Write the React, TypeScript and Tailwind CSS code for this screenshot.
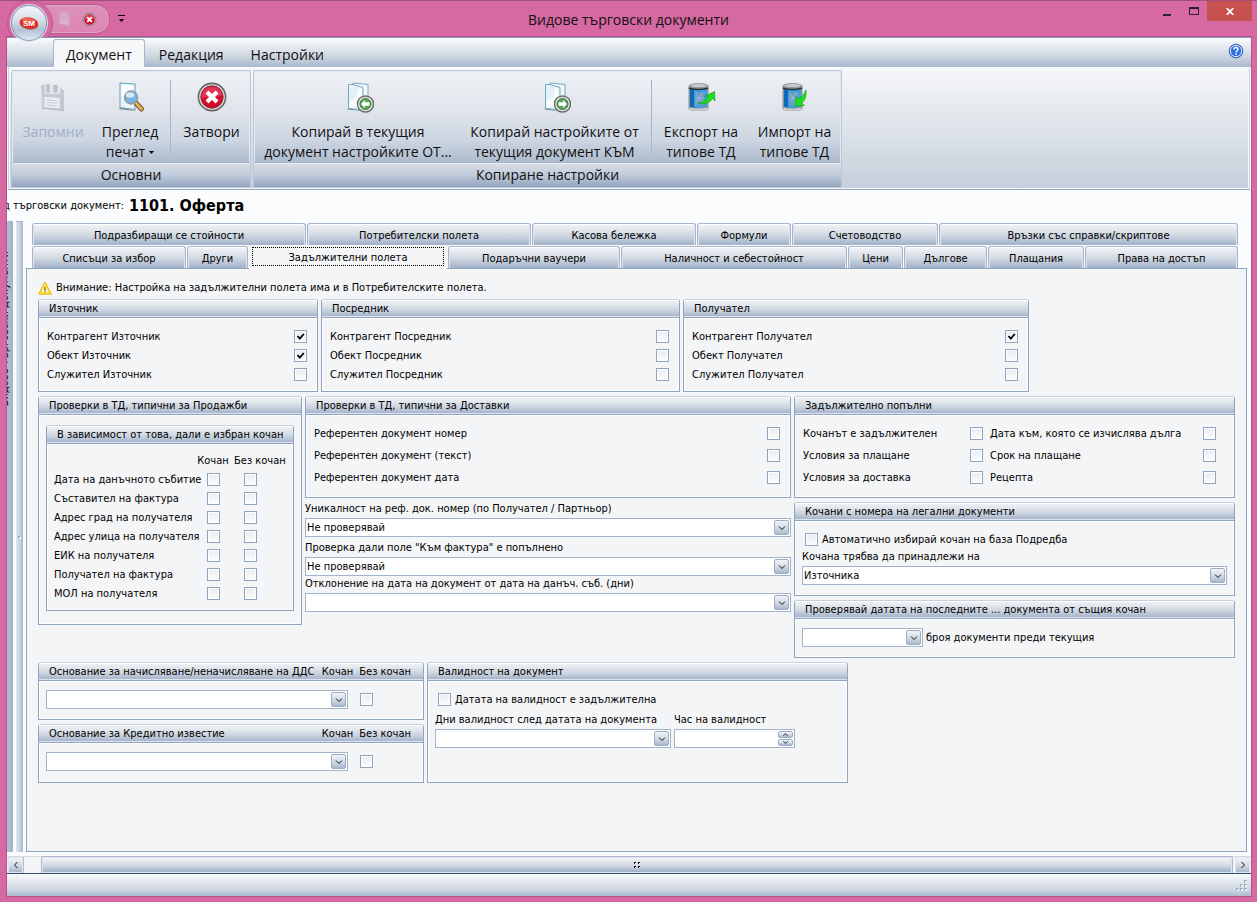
import type { ReactNode } from 'react';
import { useId } from 'react';

const HEADER =
  'bg-[linear-gradient(to_bottom,#f1f4f7_0%,#e1e6ec_30%,#c9d2de_62%,#a9b7cc_92%,#a3b2c9_100%)]';
const BUTTON =
  'bg-[linear-gradient(to_bottom,#f1f4f7_0%,#d5dce6_50%,#aab8cd_100%)]';

/* ---------- icons ---------- */

function FloppyIcon({ className }: { className: string }) {
  return (
    <svg viewBox="1 0 32 32" className={className} aria-hidden="true">
      <path d="M5 4l4-.5v9.500l15-.5V6l3 3v20L6 27z" fill="#c6ccd4" />
      <path d="M9 3h14v10l-14-.6z" fill="#e3e7ec" />
      <path d="M10.500 3h3v9l-3-.2zM17.500 4h4v7.500h-4z" fill="#b9bfc9" />
      <path d="M8.500 16l15 1v10.500l-15-1.500z" fill="#eceef1" />
      <path d="M11 19l10 .8M11 21.500l10 .8M11 24l10 .9" stroke="#c5cad3" strokeWidth="1" />
      <path d="M6 27l21 2.500V9" fill="none" stroke="#b1b8c3" strokeWidth="1.200" />
    </svg>
  );
}

function PreviewIcon() {
  return (
    <svg viewBox="0 0 32 32" className="h-8 w-8" aria-hidden="true">
      <path d="M4 28l4-1.500 14 3.500z" fill="#4c5965" opacity=".7" />
      <path d="M6 2l15 1v25.500L6 26.500z" fill="#e9f5fb" stroke="#78a6c2" strokeWidth="1.1" />
      <path d="M8 4l12 1-12 14z" fill="#fff" opacity=".8" />
      <path d="M21.500 21.500l6 6.500" stroke="#6f4a1c" strokeWidth="4.800" strokeLinecap="round" />
      <path d="M21.500 21.500l6 6.500" stroke="#e3b45f" strokeWidth="2.800" strokeLinecap="round" />
      <circle cx="17" cy="16.500" r="6.400" fill="#78b7e2" stroke="#8d9ca8" strokeWidth="1.600" />
      <ellipse cx="16" cy="14" rx="4.200" ry="2.800" fill="#d9effb" opacity=".9" />
    </svg>
  );
}

function CloseIcon({ className }: { className: string }) {
  return (
    <svg viewBox="0 0 32 32" className={className} aria-hidden="true">
      <circle cx="16" cy="16" r="13.600" fill="#e9e6e6" stroke="#6a6463" strokeWidth="1.600" />
      <circle cx="16" cy="16" r="11.200" fill="#d80a2c" stroke="#6d3a3e" strokeWidth="1" />
      <path d="M5.500 14a10.800 10.800 0 0 1 21 0q-5 2-10.500 2T5.500 17z" fill="#f0607a" opacity=".5" />
      <path d="M12.500 12.500l7 7M19.500 12.500l-7 7" stroke="#fff" strokeWidth="4.200" strokeLinecap="square" />
    </svg>
  );
}

function CopyDocIcon({ direction }: { direction: 'left' | 'right' }) {
  return (
    <svg viewBox="-2 0 32 32" className="h-8 w-8" aria-hidden="true">
      <path d="M3 28.500l3-1.500 14 3z" fill="#4c5965" opacity=".7" />
      <path d="M9 2l15 1.500v22L9 23z" fill="#f2f9fc" stroke="#76a9bd" strokeWidth="1" />
      <path d="M4.500 3.500H9l10 3V29L4.500 27.500z" fill="#e4f2f7" stroke="#76a9bd" strokeWidth="1" />
      <path d="M5.500 20q8-1 9-13l3 1v11q-5 8-12 8z" fill="#fff" opacity=".75" />
      <circle cx="21.500" cy="23" r="8" fill="#f0f1ef" stroke="#6a6d69" strokeWidth="1.500" />
      <circle cx="21.500" cy="23" r="5.600" fill="#58a55a" stroke="#47734a" strokeWidth="1" />
      {direction === 'left' ? (
        <path d="M17 23l4-4v2.300h4.500v3.400H21V27z" fill="#fff" />
      ) : (
        <path d="M26 23l-4-4v2.300h-4.500v3.400H22V27z" fill="#fff" />
      )}
    </svg>
  );
}

function DatabaseIcon({ mode }: { mode: 'export' | 'import' }) {
  return (
    <svg viewBox="0 0 32 32" className="h-8 w-8" aria-hidden="true">
      <path d="M3.500 5q0-2.500 10-2.500t10 2.500v22.500q0 2.500-10 2.500t-10-2.500z" fill="#8e9499" />
      <path d="M5 8q8.500 2 17 0v17.500q-8.500 2.500-17 0z" fill="#3aa0e4" />
      <path d="M5 8q2 .8 4 1v17.600q-2-.2-4-1z" fill="#1268b8" />
      <path d="M10 11q5 .8 9.500-.3v13q-5 1.200-9.500.2z" fill="#6e9fc4" />
      <path d="M11 13l7 9M12 20l5-8M11 17h8" stroke="#b5d2e6" strokeWidth="1" strokeDasharray="1 1" />
      <path d="M4 7.200q9.500 2.500 19 0" fill="none" stroke="#2a3238" strokeWidth="1.600" />
      <ellipse cx="13.500" cy="4.600" rx="9" ry="2" fill="#c9cccf" stroke="#8d9296" strokeWidth=".8" />
      <path d="M4.500 27.500q9 2.600 18 0" fill="none" stroke="#cdd0d3" strokeWidth="2" />
      {mode === 'export' ? (
        <path d="M13 22.500q8-1 10-8l-3.500 1L29.500 10.500 30 20l-2.500-2.500Q24 24 13 22.500z" fill="#1fe01f" stroke="#16a516" strokeWidth=".7" />
      ) : (
        <path d="M27 9q1 9-4.500 13l3 2.500-9.500.5L17 15.500l2.500 2.500Q25 15 27 9z" fill="#1fe01f" stroke="#16a516" strokeWidth=".7" />
      )}
    </svg>
  );
}

function LogoIcon() {
  return (
    <svg viewBox="0 0 36 36" className="h-9 w-9" aria-hidden="true">
      <ellipse cx="18" cy="19" rx="10" ry="6" fill="#8c1512" transform="rotate(10 18 18)" opacity=".5" />
      <ellipse cx="18" cy="18" rx="10" ry="6" fill="#e32b22" transform="rotate(10 18 18)" />
      <ellipse cx="17" cy="15.500" rx="7.500" ry="2.800" fill="#f58a7c" transform="rotate(10 18 18)" opacity=".6" />
      <text x="18" y="21" textAnchor="middle" fontFamily="Liberation Sans, sans-serif" fontSize="8.500" fontWeight="700" fill="#fff">
        SM
      </text>
    </svg>
  );
}

function HelpIcon() {
  return (
    <svg viewBox="0 0 16 16" className="h-4 w-4" aria-hidden="true">
      <circle cx="8" cy="8" r="6.800" fill="#2f6fe0" stroke="#2a52b0" strokeWidth=".9" />
      <circle cx="8" cy="8" r="5.700" fill="none" stroke="#e6efff" strokeWidth="1" />
      <path d="M6 6.500q0-2 2-2t2 1.800q0 1-1 1.600-.9.500-.9 1.500" fill="none" stroke="#fff" strokeWidth="1.400" />
      <rect x="7.300" y="10.300" width="1.500" height="1.500" fill="#fff" />
    </svg>
  );
}

function WarningIcon() {
  return (
    <svg viewBox="0 0 14 14" className="h-[14px] w-[14px] shrink-0" aria-hidden="true">
      <path d="M7 .8L13.400 13.200H.6z" fill="#fbe22e" stroke="#e3b81c" strokeWidth="1" strokeLinejoin="round" />
      <path d="M7 4.500l3.600 7H3.400z" fill="#fdf6c0" />
      <path d="M7 6v3.500" stroke="#9a3a2c" strokeWidth="1.200" />
      <rect x="6.400" y="10.200" width="1.200" height="1.200" fill="#9a3a2c" />
    </svg>
  );
}

function Chevron({ d, className }: { d: string; className: string }) {
  return (
    <svg viewBox="0 0 8 8" className={className} aria-hidden="true">
      <path d={d} fill="none" stroke="#111" strokeWidth="1" />
    </svg>
  );
}

/* ---------- form controls ---------- */

function CheckBox({ id, checked, label }: { id?: string; checked?: boolean; label?: string }) {
  return (
    <span className="inline-grid h-[13px] w-[13px] shrink-0">
      <input
        id={id}
        type="checkbox"
        defaultChecked={checked}
        aria-label={label}
        className="peer col-start-1 row-start-1 m-0 h-[13px] w-[13px] appearance-none border border-[#8fa5bf] bg-[linear-gradient(to_bottom,#e9ecf0,#fbfcfd)] shadow-[inset_0_0_0_1px_#fff]"
      />
      <svg viewBox="0 0 13 13" className="pointer-events-none col-start-1 row-start-1 hidden h-[13px] w-[13px] peer-checked:block" aria-hidden="true">
        <path d="M3.500 6l2.300 2.700L9.800 4" fill="none" stroke="#000" strokeWidth="1.800" />
      </svg>
    </span>
  );
}

function LabelledCheck({ label, checked }: { label: string; checked?: boolean }) {
  const id = useId();
  return (
    <div className="flex h-[13px] items-center justify-between">
      <label htmlFor={id} className="whitespace-nowrap">{label}</label>
      <CheckBox id={id} checked={checked} />
    </div>
  );
}

function LeadingCheck({ label }: { label: string }) {
  const id = useId();
  return (
    <div className="ml-[3px] flex h-[13px] items-center gap-1">
      <CheckBox id={id} />
      <label htmlFor={id} className="whitespace-nowrap">{label}</label>
    </div>
  );
}

function Combo({ id, value = '', label, className = 'w-full' }: { id?: string; value?: string; label?: string; className?: string }) {
  return (
    <span className={`relative block h-[19px] shrink-0 ${className}`}>
      <select
        id={id}
        aria-label={label}
        defaultValue={value}
        className="block h-[19px] w-full appearance-none rounded-none border border-[#a3b3ca] bg-white pr-5 pl-px leading-[13px]"
      >
        <option value={value}>{value}</option>
      </select>
      <span className={`pointer-events-none absolute top-[2px] right-[2px] flex h-[15px] w-[15px] items-center justify-center rounded-[2px] border border-[#9badc6] ${BUTTON}`}>
        <Chevron d="M1 2.500L4 5.500L7 2.500" className="h-2 w-2" />
      </span>
    </span>
  );
}

function Field({ label, value, labelClass = 'h-5' }: { label: string; value?: string; labelClass?: string }) {
  const id = useId();
  return (
    <div>
      <label htmlFor={id} className={`flex items-center whitespace-nowrap ${labelClass}`}>{label}</label>
      <Combo id={id} value={value} />
    </div>
  );
}

function Group({ title, extra, bodyClass, className = '', children }: { title: string; extra?: ReactNode; bodyClass: string; className?: string; children: ReactNode }) {
  return (
    <section className={`flex flex-col rounded-t-[3px] border border-[#8fa5bf] border-t-[#c6d0de] ${className}`}>
      <header className={`flex h-[18px] shrink-0 items-center justify-between rounded-t-[2px] border-b border-[#8fa5bf] pr-3 pl-[10px] whitespace-nowrap shadow-[inset_0_1px_0_#fff,inset_0_-1px_0_#dfe5ee] ${HEADER}`}>
        <h2>{title}</h2>
        {extra}
      </header>
      <div className={`grow shadow-[inset_0_0_0_1px_#fff] ${bodyClass}`}>{children}</div>
    </section>
  );
}

/* ---------- ribbon ---------- */

function RibbonButton({ icon, lines, className, disabled, menu }: { icon: ReactNode; lines: string[]; className: string; disabled?: boolean; menu?: boolean }) {
  return (
    <button
      type="button"
      disabled={disabled}
      className={`flex shrink-0 flex-col items-center pt-[10px] text-center whitespace-nowrap disabled:text-[#9fafc6] ${className}`}
    >
      {icon}
      <span className="mt-[9px] flex flex-col leading-5">
        {lines.map((line, i) => (
          <span key={line} className="flex items-center justify-center gap-1">
            {line}
            {menu && i === lines.length - 1 ? (
              <svg viewBox="0 0 5 3" className="h-[3px] w-[5px]" aria-hidden="true"><path d="M0 0h5L2.500 3z" fill="#000" /></svg>
            ) : null}
          </span>
        ))}
      </span>
    </button>
  );
}

function RibbonGroup({ caption, children }: { caption: string; children: ReactNode }) {
  return (
    <section className="flex flex-col rounded-[2px] border border-[#bcc8d8] border-b-[#8fa3bf] bg-[linear-gradient(to_bottom,#eff2f5_0%,#e0e4eb_35%,#cdd6e2_60%,#a9b7cb_82%)] shadow-[inset_0_0_0_1px_#e4e9f0]">
      <div className="flex h-[92px]">{children}</div>
      <h2 className="h-[23px] border-t border-[#e9eef4] bg-[linear-gradient(to_bottom,#d6dde7_0%,#c0cbda_50%,#9aabc3_95%)] text-center leading-[22px] shadow-[0_-1px_0_#a4b4ca]">
        {caption}
      </h2>
    </section>
  );
}

function RibbonSeparator() {
  return <span className="mt-[9px] mr-[2px] ml-1 h-[74px] w-px shrink-0 bg-[linear-gradient(to_bottom,#9fb2c8,#a9b9cc)]" />;
}

/* ---------- page tabs ---------- */

function PageTab({ label }: { label: string }) {
  return (
    <button
      type="button"
      role="tab"
      aria-selected={false}
      className={`h-[22px] truncate rounded-t-[3px] border-x border-t border-[#a5b5cb] pt-[2px] shadow-[inset_0_1px_0_#fff,inset_1px_0_0_#dfe5ee,inset_-1px_0_0_#dfe5ee] ${HEADER}`}
    >
      {label}
    </button>
  );
}

const upperTabs = ['Подразбиращи се стойности', 'Потребителски полета', 'Касова бележка', 'Формули', 'Счетоводство', 'Връзки със справки/скриптове'];
const lowerTabs = ['Списъци за избор', 'Други', 'Задължителни полета', 'Подаръчни ваучери', 'Наличност и себестойност', 'Цени', 'Дългове', 'Плащания', 'Права на достъп'];
const salesRows = ['Дата на данъчното събитие', 'Съставител на фактура', 'Адрес град на получателя', 'Адрес улица на получателя', 'ЕИК на получателя', 'Получател на фактура', 'МОЛ на получателя'];

function BasisGroup({ title, bodyClass }: { title: string; bodyClass: string }) {
  return (
    <Group
      title={title}
      bodyClass={`flex gap-3 px-[7px] pt-[9px] ${bodyClass}`}
      extra={
        <span className="flex gap-[6px]">
          <span>Кочан</span>
          <span>Без кочан</span>
        </span>
      }
    >
      <Combo label={`${title}: Кочан`} className="w-[302px]" />
      <span className="pt-[3px] leading-none">
        <CheckBox label={`${title}: Без кочан`} />
      </span>
    </Group>
  );
}

function RequiredFieldsPage() {
  const daysId = useId();
  const hourId = useId();
  return (
    <div className="flex flex-col gap-1 px-[11px] pt-[11px] pb-4">
      <p className="flex h-[15px] items-center gap-1">
        <WarningIcon />
        Внимание: Настройка на задължителни полета има и в Потребителските полета.
      </p>

      <div className="grid grid-cols-[280fr_359fr_346fr_203fr] gap-[3px]">
        {[
          { title: 'Източник', checks: [true, true, false] },
          { title: 'Посредник', checks: [false, false, false] },
          { title: 'Получател', checks: [true, false, false] },
        ].map(({ title, checks }) => (
          <Group key={title} title={title} bodyClass="flex flex-col gap-[6px] pt-3 pr-[10px] pb-[10px] pl-2">
            <LabelledCheck label={`Контрагент ${title}`} checked={checks[0]} />
            <LabelledCheck label={`Обект ${title}`} checked={checks[1]} />
            <LabelledCheck label={`Служител ${title}`} checked={checks[2]} />
          </Group>
        ))}
      </div>

      <div className="grid grid-cols-[minmax(0,264fr)_minmax(0,486fr)_minmax(0,441fr)] items-start gap-[3px]">
        <Group title="Проверки в ТД, типични за Продажби" bodyClass="px-[7px] pt-[10px] pb-[13px]">
          <Group title="В зависимост от това, дали е избран кочан" bodyClass="px-[7px] py-[7px]">
            <table className="w-full table-fixed border-collapse">
              <thead>
                <tr className="h-[19px]">
                  <td />
                  <th scope="col" className="w-8 p-0 text-center font-normal">Кочан</th>
                  <th scope="col" className="w-[57px] p-0 pl-[5px] text-left font-normal whitespace-nowrap">Без кочан</th>
                </tr>
              </thead>
              <tbody>
                {salesRows.map((row) => (
                  <tr key={row} className="h-[19px]">
                    <th scope="row" className="p-0 text-left font-normal whitespace-nowrap">{row}</th>
                    <td className="p-0">
                      <span className="flex justify-center"><CheckBox label={`${row}: Кочан`} /></span>
                    </td>
                    <td className="p-0">
                      <span className="flex pl-[15px]"><CheckBox label={`${row}: Без кочан`} /></span>
                    </td>
                  </tr>
                ))}
              </tbody>
            </table>
          </Group>
        </Group>

        <div>
          <Group title="Проверки в ТД, типични за Доставки" bodyClass="flex flex-col gap-[9px] pt-3 pr-[10px] pb-[13px] pl-2">
            <LabelledCheck label="Референтен документ номер" />
            <LabelledCheck label="Референтен документ (текст)" />
            <LabelledCheck label="Референтен документ дата" />
          </Group>
          <Field label="Уникалност на реф. док. номер (по Получател / Партньор)" value="Не проверявай" />
          <Field label={'Проверка дали поле "Към фактура" е попълнено'} value="Не проверявай" />
          <Field label="Отклонение на дата на документ от дата на данъч. съб. (дни)" labelClass="mb-[2px] h-[15px]" />
        </div>

        <div className="flex flex-col gap-1">
          <Group title="Задължително попълни" bodyClass="grid grid-cols-[180fr_226fr] gap-x-[7px] gap-y-[9px] pt-3 pr-[18px] pb-[13px] pl-2">
            <LabelledCheck label="Кочанът е задължителен" />
            <LabelledCheck label="Дата към, която се изчислява дълга" />
            <LabelledCheck label="Условия за плащане" />
            <LabelledCheck label="Срок на плащане" />
            <LabelledCheck label="Условия за доставка" />
            <LabelledCheck label="Рецепта" />
          </Group>
          <Group title="Кочани с номера на легални документи" bodyClass="px-[7px] pt-3 pb-[10px]">
            <LeadingCheck label="Автоматично избирай кочан на база Подредба" />
            <Field label="Кочана трябва да принадлежи на" value="Източника" />
          </Group>
          <Group title="Проверявай датата на последните ... документа от същия кочан" bodyClass="flex items-center gap-[3px] px-[7px] pt-[9px] pb-[10px]">
            <Combo label="Брой документи" className="w-[121px]" />
            <span>броя документи преди текущия</span>
          </Group>
        </div>
      </div>

      <div className="grid grid-cols-[minmax(0,386fr)_minmax(0,421fr)_minmax(0,384fr)] gap-[3px]">
        <div className="flex flex-col gap-1">
          <BasisGroup title="Основание за начисляване/неначисляване на ДДС" bodyClass="pb-[10px]" />
          <BasisGroup title="Основание за Кредитно известие" bodyClass="pb-[11px]" />
        </div>
        <Group title="Валидност на документ" bodyClass="px-[7px] pt-3">
          <LeadingCheck label="Датата на валидност е задължителна" />
          <div className="mt-[3px] flex gap-[3px]">
            <div className="w-[236px]">
              <label htmlFor={daysId} className="flex h-5 items-center whitespace-nowrap">Дни валидност след датата на документа</label>
              <Combo id={daysId} />
            </div>
            <div className="w-[121px]">
              <label htmlFor={hourId} className="flex h-5 items-center whitespace-nowrap">Час на валидност</label>
              <span className="relative block">
                <input id={hourId} type="text" className="block h-[19px] w-full border border-[#a3b3ca] bg-white pr-5 pl-px" />
                <span className="absolute top-[2px] right-[2px] flex w-[15px] flex-col gap-px">
                  <button type="button" aria-label="Увеличи" className={`flex h-[7px] items-center justify-center rounded-[2px] border border-[#9badc6] ${BUTTON}`}>
                    <Chevron d="M1.500 5.500L4 3L6.500 5.500" className="h-[7px] w-[7px]" />
                  </button>
                  <button type="button" aria-label="Намали" className={`flex h-[7px] items-center justify-center rounded-[2px] border border-[#9badc6] ${BUTTON}`}>
                    <Chevron d="M1.500 2.500L4 5L6.500 2.500" className="h-[7px] w-[7px]" />
                  </button>
                </span>
              </span>
            </div>
          </div>
        </Group>
      </div>
    </div>
  );
}

/* ---------- window ---------- */

function TitleBar() {
  return (
    <div className="relative grid h-9 grid-cols-[1fr_auto_1fr] border-t border-[#a34f7e]">
      <div className="flex overflow-hidden">
        <div className="relative ml-[42px] mt-[3px] flex h-[30px] w-[68px] items-center gap-[9px] rounded-r-[14px] border border-[#b65c8d] bg-[linear-gradient(to_bottom,#dc92ba,#dd85b3)] pl-[14px] shadow-[inset_0_0_0_1px_#e3a3c6]">
          <button type="button" aria-label="Запомни" disabled className="opacity-40">
            <FloppyIcon className="h-4 w-4" />
          </button>
          <button type="button" aria-label="Затвори">
            <CloseIcon className="h-[15px] w-[15px]" />
          </button>
          <span className="absolute -top-[5px] -left-[36px] h-[46px] w-[46px] rounded-full border border-[#b65c8d] bg-[#d668a2]" />
        </div>
        <button type="button" aria-label="Настройка на лентата" className="mt-[13px] ml-2 h-[9px] w-[7px]">
          <svg viewBox="0 0 7 8" className="h-2 w-[7px]" aria-hidden="true"><path d="M0 0h7v1H0zM1 4h5L3.500 7z" fill="#000" /></svg>
        </button>
      </div>
      <h1 className="pt-[2px] leading-[34px] whitespace-nowrap">Видове търговски документи</h1>
      <div className="flex items-start justify-end pr-[5px]">
        <button type="button" aria-label="Минимизирай" className="flex h-5 w-7 items-center justify-center">
          <svg viewBox="0 0 10 10" className="h-[10px] w-[10px]" aria-hidden="true"><path d="M1 8h8v2H1z" fill="#2b2230" /></svg>
        </button>
        <button type="button" aria-label="Максимизирай" className="flex h-5 w-[26px] items-center justify-center">
          <svg viewBox="0 0 10 8" className="h-2 w-[10px]" aria-hidden="true"><path d="M0 0h10v8H0zM1 2v5h8V2z" fill="#2b2230" fillRule="evenodd" /></svg>
        </button>
        <button type="button" aria-label="Затвори прозореца" className="flex h-5 w-[45px] items-center justify-center bg-[#c75050]">
          <svg viewBox="0 0 8 7" className="h-[7px] w-2" aria-hidden="true"><path d="M.7 0L7.300 7M7.300 0L.7 7" stroke="#fff" strokeWidth="1.700" /></svg>
        </button>
      </div>
      <button
        type="button"
        aria-label="Меню"
        className="absolute top-[4px] left-[11px] z-10 flex h-9 w-9 items-center justify-center rounded-full border border-[#8ba0c0] bg-[linear-gradient(to_bottom,#f4f7fa_0%,#d3dce8_45%,#b3c2d6_70%,#dfe7f0_100%)] shadow-[0_0_0_1px_#dbe3ef]"
      >
        <LogoIcon />
      </button>
    </div>
  );
}

function Ribbon() {
  return (
    <div>
      <nav className="flex h-[30px] items-end border-t border-[#8796b5] bg-[linear-gradient(to_bottom,#fafbfc_0%,#e6eaef_30%,#ccd5e0_65%,#a9b8ce_100%)]">
        <button type="button" className="ml-[46px] h-[28px] rounded-t-[3px] border-x border-t border-[#a7b6cc] bg-[#f6f7f9] px-3 pt-[2px]">Документ</button>
        <button type="button" className="ml-[2px] h-[28px] px-3 pt-[3px]">Редакция</button>
        <button type="button" className="ml-[3px] h-[28px] px-3 pt-[3px]">Настройки</button>
        <button type="button" aria-label="Помощ" className="mr-[7px] mb-2 ml-auto"><HelpIcon /></button>
      </nav>
      <div className="mx-px flex gap-[2px] border border-[#c9d2de] border-t-white border-b-[#93a5bd] bg-[linear-gradient(to_bottom,#f7f8fa_0%,#e5e9ed_35%,#dfe4ec_50%,#d0d9e2_75%,#c8cddb_100%)] px-[2px] py-[2px] shadow-[inset_0_0_0_1px_#f3f6f9]">
        <RibbonGroup caption="Основни">
          <RibbonButton className="w-[82px]" disabled icon={<FloppyIcon className="h-8 w-8" />} lines={['Запомни']} />
          <RibbonButton className="w-[72px]" menu icon={<PreviewIcon />} lines={['Преглед', 'печат']} />
          <RibbonSeparator />
          <RibbonButton className="w-[77px]" icon={<CloseIcon className="h-8 w-8" />} lines={['Затвори']} />
        </RibbonGroup>
        <RibbonGroup caption="Копиране настройки">
          <RibbonButton className="w-[208px]" icon={<CopyDocIcon direction="left" />} lines={['Копирай в текущия', 'документ настройките ОТ...']} />
          <RibbonButton className="w-[185px]" icon={<CopyDocIcon direction="right" />} lines={['Копирай настройките от', 'текущия документ КЪМ']} />
          <RibbonSeparator />
          <RibbonButton className="w-[94px]" icon={<DatabaseIcon mode="export" />} lines={['Експорт на', 'типове ТД']} />
          <RibbonButton className="w-[93px]" icon={<DatabaseIcon mode="import" />} lines={['Импорт на', 'типове ТД']} />
        </RibbonGroup>
      </div>
    </div>
  );
}

function ScrollBar() {
  return (
    <div className="flex h-[17px] border-t border-[#d3dbe6] bg-[#f4f5f7]">
      <button type="button" aria-label="Наляво" className={`ml-px flex w-[15px] items-center justify-center border border-[#dfe5ee] ${BUTTON}`}>
        <Chevron d="M5.500 1L2.500 4L5.500 7" className="h-2 w-2" />
      </button>
      <div className="flex grow border-x border-[#b4c1d3] pl-[18px]">
        <div className={`flex grow items-center justify-center rounded-[2px] border border-[#dfe5ee] shadow-[0_0_0_1px_#a9b8cd] ${HEADER}`}>
          <svg viewBox="0 0 8 8" className="h-2 w-2" aria-hidden="true">
            <path d="M1 1h2v1H2v1H1zM5 1h2v1H6v1H5zM1 5h2v1H2v1H1zM5 5h2v1H6v1H5z" fill="#111" />
            <path d="M2 2h1v1H2zM6 2h1v1H6zM2 6h1v1H2zM6 6h1v1H6z" fill="#fff" />
          </svg>
        </div>
      </div>
      <button type="button" aria-label="Надясно" className={`mr-px ml-[2px] flex w-[15px] items-center justify-center border border-[#dfe5ee] ${BUTTON}`}>
        <Chevron d="M2.500 1L5.500 4L2.500 7" className="h-2 w-2" />
      </button>
    </div>
  );
}

export default function App() {
  return (
    <div className="flex min-h-screen flex-col bg-[#d668a2] pb-[5px] font-['Open_Sans',sans-serif] text-[14px] leading-5 text-[#111]">
      <TitleBar />
      <div className="mr-[5px] ml-[6px] flex grow flex-col border border-[#b0548a] bg-[#fafcfd]">
        <Ribbon />

        <main className="flex grow flex-col overflow-hidden font-['DejaVu_Sans_Condensed','DejaVu_Sans',sans-serif] text-[11px] leading-[13px] text-black">
          <div className="flex h-[31px] items-center gap-[5px]">
            <span className="flex w-[117px] justify-end overflow-hidden whitespace-nowrap">Вид търговски документ:</span>
            <strong className="text-base whitespace-nowrap">1101. Оферта</strong>
          </div>

          <div className="flex grow gap-[3px] pr-1 pb-1">
            <aside className="relative w-[6px] shrink-0 overflow-hidden border-t border-r border-[#a5b5cb] bg-[linear-gradient(to_right,#b3c0d2,#a4b3c9)]">
              <span className="absolute top-[29px] -left-[9px] rotate-180 whitespace-nowrap [writing-mode:vertical-rl]">Видове търговски документи</span>
            </aside>
            <div className="flex w-[7px] shrink-0 items-center justify-center border-t border-[#a5b5cb] bg-[linear-gradient(to_right,#dfe5ed,#c9d2de_50%,#a8b7cc)]">
              <span className="h-[3px] w-[3px] border border-[#8fa3bf] border-r-white border-b-white" />
            </div>

            <div className="flex min-w-0 grow flex-col pt-[2px]">
              <div role="tablist" className="flex flex-col gap-px pr-[9px] pl-[6px]">
                <div className="grid grid-cols-[274fr_224fr_164fr_94fr_146fr_299fr] gap-px">
                  {upperTabs.map((tab) => <PageTab key={tab} label={tab} />)}
                </div>
                <div className="grid grid-cols-[154fr_61fr_198fr_172fr_226fr_55fr_83fr_96fr_153fr] gap-px">
                  {lowerTabs.map((tab) =>
                    tab === 'Задължителни полета' ? (
                      <button key={tab} type="button" role="tab" aria-selected className="relative z-10 -mt-px -mb-px flex bg-[#f4f5f7] px-[3px] pt-[2px] pb-[3px]">
                        <span className="flex grow items-center justify-center border border-dotted border-black pt-[2px]">{tab}</span>
                      </button>
                    ) : (
                      <PageTab key={tab} label={tab} />
                    ),
                  )}
                </div>
              </div>
              <div role="tabpanel" className="grow border border-[#8fa5bf] bg-[#f4f5f7]">
                <RequiredFieldsPage />
              </div>
            </div>
          </div>

          <ScrollBar />
        </main>

        <footer className="flex h-[23px] items-end justify-end border-t border-[#2f4d75] bg-[linear-gradient(to_bottom,#fafbfc_0%,#dfe4eb_40%,#cfd7e2_70%,#acbbd0_100%)] pr-[3px] pb-1">
          <svg viewBox="0 0 12 12" className="h-3 w-3" aria-hidden="true">
            <path d="M8 0h3v3H8zM4 4h3v3H4zM8 4h3v3H8zM0 8h3v3H0zM4 8h3v3H4zM8 8h3v3H8z" fill="#9aaac2" />
            <path d="M9 1h2v2H9zM5 5h2v2H5zM9 5h2v2H9zM1 9h2v2H1zM5 9h2v2H5zM9 9h2v2H9z" fill="#eef2f7" />
          </svg>
        </footer>
      </div>
    </div>
  );
}
